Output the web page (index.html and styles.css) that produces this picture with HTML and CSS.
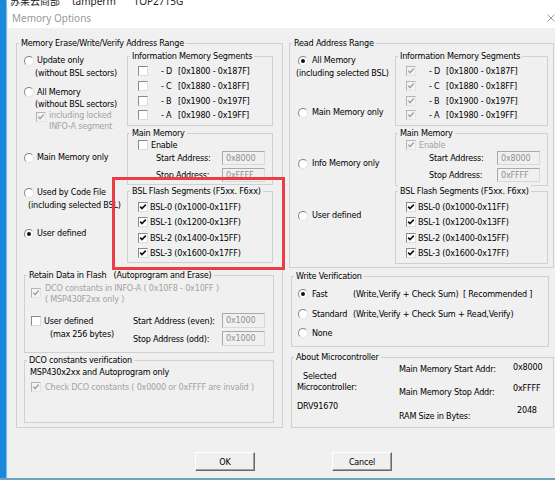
FILE: index.html
```html
<!DOCTYPE html>
<html lang="en">

<head>
    <meta charset="UTF-8">
    <meta name="viewport" content="width=device-width, initial-scale=1.0">
    <title>Memory Options</title>
    <link rel="stylesheet" href="styles.css">
</head>

<body>
    <!-- window behind the dialog -->
    <div class="edge"></div>

    <div class="screen">
        <div class="behind">
            <span class="behind-cjk">苏果云商部</span>
            <span class="behind-a">tamperm</span>
            <span class="behind-b">TOP2715G</span>
        </div>

        <div class="dialog">
            <div class="titlebar">
                <span class="title">Memory Options</span>
                <svg class="close" viewBox="0 0 8 8" width="8" height="8">
                    <path d="M0.5 0.5 L7.5 7.5 M7.5 0.5 L0.5 7.5" stroke="#9a9a9a" stroke-width="1" fill="none" />
                </svg>
            </div>

            <div class="dialog-body">
                <div class="columns">

                    <!-- Erase / write / verify -->
                    <div class="group erase">
                        <span class="group-title">Memory Erase/Write/Verify Address Range</span>

                        <div class="group-top">
                            <div class="radio-col radio-col-l">
                                <div class="opt opt-update">
                                    <span class="radio"></span>
                                    <div class="opt-text">
                                        <div>Update only</div>
                                        <div class="sub">(without BSL sectors)</div>
                                    </div>
                                </div>
                                <div class="opt opt-all">
                                    <span class="radio"></span>
                                    <div class="opt-text">
                                        <div>All Memory</div>
                                        <div class="sub">(without BSL sectors)</div>
                                        <div class="check-item locked">
                                            <span class="check on off"></span>
                                            <div class="dim">including locked<br>INFO-A segment</div>
                                        </div>
                                    </div>
                                </div>
                                <div class="opt opt-main">
                                    <span class="radio"></span>
                                    <div class="opt-text">Main Memory only</div>
                                </div>
                                <div class="opt opt-code">
                                    <span class="radio"></span>
                                    <div class="opt-text">
                                        <div>Used by Code File</div>
                                        <div class="sub sub-far">(including selected BSL)</div>
                                    </div>
                                </div>
                                <div class="opt opt-user">
                                    <span class="radio on"></span>
                                    <div class="opt-text">User defined</div>
                                </div>
                            </div>

                            <div class="subframes subframes-l">
                                <div class="group info">
                                    <span class="group-title">Information Memory Segments</span>
                                    <div class="seg-row"><span class="check"></span><span class="seg-letter">- D</span><span>[0x1800 - 0x187F]</span></div>
                                    <div class="seg-row"><span class="check"></span><span class="seg-letter">- C</span><span>[0x1880 - 0x18FF]</span></div>
                                    <div class="seg-row"><span class="check"></span><span class="seg-letter">- B</span><span>[0x1900 - 0x197F]</span></div>
                                    <div class="seg-row"><span class="check"></span><span class="seg-letter">- A</span><span>[0x1980 - 0x19FF]</span></div>
                                </div>

                                <div class="group main side-l">
                                    <span class="group-title">Main Memory</span>
                                    <div class="enable-row"><span class="check"></span><span>Enable</span></div>
                                    <div class="addr-row"><span class="addr-label">Start Address:</span><span class="field">0x8000</span></div>
                                    <div class="addr-row"><span class="addr-label">Stop Address:</span><span class="field">0xFFFF</span></div>
                                </div>

                                <div class="group bsl">
                                    <span class="group-title">BSL Flash Segments (F5xx. F6xx)</span>
                                    <div class="bsl-row"><span class="check on"></span><span>BSL-0 (0x1000-0x11FF)</span></div>
                                    <div class="bsl-row"><span class="check on"></span><span>BSL-1 (0x1200-0x13FF)</span></div>
                                    <div class="bsl-row"><span class="check on"></span><span>BSL-2 (0x1400-0x15FF)</span></div>
                                    <div class="bsl-row"><span class="check on"></span><span>BSL-3 (0x1600-0x17FF)</span></div>
                                </div>
                            </div>
                        </div>

                        <div class="group retain">
                            <span class="group-title">Retain Data in Flash&nbsp;&nbsp;&nbsp;(Autoprogram and Erase)</span>
                            <div class="check-item dco-info">
                                <span class="check on off"></span>
                                <div class="dim">DCO constants in INFO-A ( 0x10F8 - 0x10FF )<br>( MSP430F2xx only )</div>
                            </div>
                            <div class="retain-user">
                                <div class="check-item user-def">
                                    <span class="check"></span>
                                    <div>User defined<div class="max">(max 256 bytes)</div></div>
                                </div>
                                <div class="retain-addr">
                                    <div class="addr-row"><span class="addr-label">Start Address (even):</span><span class="field">0x1000</span></div>
                                    <div class="addr-row"><span class="addr-label">Stop Address (odd):</span><span class="field">0x1000</span></div>
                                </div>
                            </div>
                        </div>

                        <div class="group dco">
                            <span class="group-title">DCO constants verification</span>
                            <div>MSP430x2xx and Autoprogram only</div>
                            <div class="check-item dco-check">
                                <span class="check on off"></span>
                                <span class="dim">Check DCO constants ( 0x0000 or 0xFFFF are invalid )</span>
                            </div>
                        </div>
                    </div>

                    <div class="right-col">
                        <!-- Read range -->
                        <div class="group read">
                            <span class="group-title">Read Address Range</span>
                            <div class="group-top">
                                <div class="radio-col radio-col-r">
                                    <div class="opt opt-r1">
                                        <span class="radio on"></span>
                                        <div class="opt-text">
                                            <div>All Memory</div>
                                            <div class="sub sub-wide">(including selected BSL)</div>
                                        </div>
                                    </div>
                                    <div class="opt opt-r2">
                                        <span class="radio"></span>
                                        <div class="opt-text">Main Memory only</div>
                                    </div>
                                    <div class="opt opt-r3">
                                        <span class="radio"></span>
                                        <div class="opt-text">Info Memory only</div>
                                    </div>
                                    <div class="opt opt-r4">
                                        <span class="radio"></span>
                                        <div class="opt-text">User defined</div>
                                    </div>
                                </div>

                                <div class="subframes subframes-r">
                                    <div class="group info">
                                        <span class="group-title">Information Memory Segments</span>
                                        <div class="seg-row"><span class="check on off"></span><span class="seg-letter">- D</span><span>[0x1800 - 0x187F]</span></div>
                                        <div class="seg-row"><span class="check on off"></span><span class="seg-letter">- C</span><span>[0x1880 - 0x18FF]</span></div>
                                        <div class="seg-row"><span class="check on off"></span><span class="seg-letter">- B</span><span>[0x1900 - 0x197F]</span></div>
                                        <div class="seg-row"><span class="check on off"></span><span class="seg-letter">- A</span><span>[0x1980 - 0x19FF]</span></div>
                                    </div>

                                    <div class="group main side-r">
                                        <span class="group-title">Main Memory</span>
                                        <div class="enable-row"><span class="check on off"></span><span class="dim">Enable</span></div>
                                        <div class="addr-row"><span class="addr-label">Start Address:</span><span class="field">0x8000</span></div>
                                        <div class="addr-row"><span class="addr-label">Stop Address:</span><span class="field">0xFFFF</span></div>
                                    </div>

                                    <div class="group bsl">
                                        <span class="group-title">BSL Flash Segments (F5xx. F6xx)</span>
                                        <div class="bsl-row"><span class="check on"></span><span>BSL-0 (0x1000-0x11FF)</span></div>
                                        <div class="bsl-row"><span class="check on"></span><span>BSL-1 (0x1200-0x13FF)</span></div>
                                        <div class="bsl-row"><span class="check on"></span><span>BSL-2 (0x1400-0x15FF)</span></div>
                                        <div class="bsl-row"><span class="check on"></span><span>BSL-3 (0x1600-0x17FF)</span></div>
                                    </div>
                                </div>
                            </div>
                        </div>

                        <!-- Write verification -->
                        <div class="group write">
                            <span class="group-title">Write Verification</span>
                            <div class="wv-row">
                                <span class="radio on"></span>
                                <span class="wv-name">Fast</span>
                                <span class="wv-desc">(Write,Verify + Check Sum)</span>
                                <span>[ Recommended ]</span>
                            </div>
                            <div class="wv-row">
                                <span class="radio"></span>
                                <span class="wv-name">Standard</span>
                                <span>(Write,Verify + Check Sum + Read,Verify)</span>
                            </div>
                            <div class="wv-row">
                                <span class="radio"></span>
                                <span class="wv-name">None</span>
                            </div>
                        </div>

                        <!-- Device info -->
                        <div class="group about">
                            <span class="group-title">About Microcontroller</span>
                            <div class="about-left">
                                <div class="selected">Selected</div>
                                <div>Microcontroller:</div>
                                <div class="device">DRV91670</div>
                            </div>
                            <div class="about-right">
                                <div class="ab-row ab-1"><span class="ab-label">Main Memory Start Addr:</span><span>0x8000</span></div>
                                <div class="ab-row ab-2"><span class="ab-label">Main Memory Stop Addr:</span><span>0xFFFF</span></div>
                                <div class="ab-row ab-3"><span class="ab-label">RAM Size in Bytes:</span><span class="ab-ram">2048</span></div>
                            </div>
                        </div>
                    </div>
                </div>

                <div class="buttons">
                    <button class="btn">OK</button>
                    <button class="btn">Cancel</button>
                </div>

                <!-- red marker drawn over the BSL segments -->
                <div class="highlight"></div>
            </div>
        </div>
    </div>
</body>

</html>
```

FILE: styles.css
```css
* {
    margin: 0;
    padding: 0;
    box-sizing: border-box;
}

body {
    width: 555px;
    height: 480px;
    overflow: hidden;
    display: flex;
    background: #fff;
    border-bottom: 2px solid #6fa3ba;
    font-family: "DejaVu Sans Condensed", "DejaVu Sans", sans-serif;
    font-stretch: condensed;
    font-size: 9px;
    letter-spacing: -0.2px;
    line-height: 12px;
    color: #000;
    white-space: nowrap;
}

.edge {
    width: 7px;
    flex: none;
    background: #1b89d9;
    border-right: 1px solid #79bdee;
}

.screen {
    flex: 1;
    display: flex;
    flex-direction: column;
    min-width: 0;
}

/* strip of the window behind */
.behind {
    height: 7px;
    overflow: hidden;
    display: flex;
    align-items: flex-start;
    padding-left: 3px;
    font-family: "Noto Sans", "Noto Sans CJK SC", sans-serif;
    font-size: 10px;
    line-height: 12px;
    letter-spacing: 0;
    color: #222;
}

.behind span {
    margin-top: -5px;
}

.behind-a {
    margin-left: 12px;
}

.behind-b {
    margin-left: 18px;
}

.dialog {
    flex: 1;
    display: flex;
    flex-direction: column;
    background: #f0f0f0;
    border-left: 1px solid #e4ecf3;
}

.titlebar {
    height: 21px;
    flex: none;
    display: flex;
    align-items: center;
    padding-left: 4px;
    background: #fff;
}

.title {
    font-family: "Noto Sans", sans-serif;
    font-size: 10px;
    letter-spacing: 0;
    color: #999;
}

.close {
    margin-left: auto;
}

.dialog-body {
    flex: 1;
    position: relative;
    padding: 15px 0 0 8px;
}

.columns {
    display: flex;
    align-items: flex-start;
}

/* group boxes */
.group {
    position: relative;
    border: 1px solid #d0d0d0;
}

.group-title {
    position: absolute;
    top: -7px;
    left: 2px;
    padding: 0 2px;
    background: #f0f0f0;
    line-height: 12px;
}

.group-top {
    display: flex;
}

.erase {
    width: 267px;
    height: 385px;
    padding: 0 8px 0 7px;
}

.radio-col-l {
    width: 103px;
}

.subframes-l {
    width: 146px;
}

.right-col {
    width: 265px;
    margin-left: 6px;
}

.read {
    height: 225px;
    padding-right: 5px;
}

.radio-col-r {
    width: 105px;
    padding-left: 8px;
}

.subframes-r {
    width: 153px;
}

/* radio buttons and check boxes */
.radio {
    position: relative;
    flex: none;
    width: 10px;
    height: 10px;
    margin-top: 1px;
    border-radius: 50%;
    background: #fff;
    border: 1px solid;
    border-color: #858585 #e2e2e2 #e2e2e2 #858585;
}

.radio.on::after {
    content: "";
    position: absolute;
    left: 2px;
    top: 2px;
    width: 4px;
    height: 4px;
    border-radius: 50%;
    background: #111;
}

.check {
    flex: none;
    width: 10px;
    height: 10px;
    background: #fff;
    border: 1px solid;
    border-color: #8a8a8a #dcdcdc #dcdcdc #8a8a8a;
}

.check.on {
    background: #fff url("data:image/svg+xml,%3Csvg xmlns='http://www.w3.org/2000/svg' viewBox='0 0 8 8'%3E%3Cpath d='M1.2 3.6 L3 5.6 L6.8 1.6' stroke='%23111' stroke-width='1.6' fill='none'/%3E%3C/svg%3E") center / 8px 8px no-repeat;
}

.check.on.off {
    background-color: #f3f3f3;
    background-image: url("data:image/svg+xml,%3Csvg xmlns='http://www.w3.org/2000/svg' viewBox='0 0 8 8'%3E%3Cpath d='M1.2 3.6 L3 5.6 L6.8 1.6' stroke='%23a4a4a4' stroke-width='1.4' fill='none'/%3E%3C/svg%3E");
    border-color: #b4b4b4 #e4e4e4 #e4e4e4 #b4b4b4;
}

.dim {
    color: #a3a3a3;
}

/* options in the radio columns */
.opt {
    display: flex;
    align-items: flex-start;
    gap: 3px;
    line-height: 13px;
}

.opt .radio {
    margin-top: 1.5px;
}

.sub {
    margin-left: -2px;
}

.sub-far {
    margin-left: -9px;
}

.sub-wide {
    margin-left: -16px;
}

.opt-update {
    margin-top: 10px;
}

.opt-all {
    margin-top: 6px;
    line-height: 12px;
}

.opt-all .radio {
    margin-top: 1px;
}

.opt-main {
    margin-top: 19px;
    line-height: 12px;
}

.opt-code {
    margin-top: 23px;
}

.opt-user {
    margin-top: 15px;
    line-height: 12px;
}

.radio-col-r .opt {
    gap: 4px;
}

.opt-r1 {
    margin-top: 10px;
}

.opt-r2 {
    margin-top: 26px;
}

.opt-r3 {
    margin-top: 38px;
}

.opt-r4 {
    margin-top: 39px;
}

.check-item {
    display: flex;
    align-items: flex-start;
}

.locked {
    margin-left: -1px;
    gap: 3px;
    line-height: 11px;
}

.locked .check {
    margin-top: 2px;
}

/* information segments */
.info {
    margin-top: 12px;
    height: 70px;
    padding-top: 7px;
}

.seg-row {
    display: flex;
    align-items: center;
    height: 14.7px;
    padding-left: 10px;
}

.seg-letter {
    width: 17px;
    margin-left: 13px;
}

/* main memory */
.main {
    margin-top: 7px;
    height: 52px;
    padding-top: 5px;
}

.subframes-r .main {
    height: 53px;
}

.enable-row {
    display: flex;
    align-items: center;
    gap: 3px;
    height: 12px;
    padding-left: 10px;
}

.addr-row {
    display: flex;
    align-items: center;
    height: 14px;
}

.addr-row + .addr-row {
    margin-top: 3px;
}

.side-l .addr-row {
    padding-left: 28px;
}

.side-l .addr-label {
    width: 66px;
}

.side-r .addr-row {
    padding-left: 33px;
}

.side-r .addr-label {
    width: 68px;
}

.field {
    width: 43px;
    height: 14px;
    padding-left: 3px;
    line-height: 12px;
    background: #f0f0f0;
    border: 1px solid;
    border-color: #a9a9a9 #d9d9d9 #d9d9d9 #a9a9a9;
    color: #909090;
}

/* BSL segments */
.bsl {
    margin-top: 6px;
    height: 72px;
    padding-top: 7.5px;
}

.subframes-r .bsl {
    margin-top: 5px;
    height: 73px;
}

.bsl-row {
    display: flex;
    align-items: center;
    gap: 2px;
    height: 15.33px;
    padding-left: 10px;
}

/* retain data */
.retain {
    margin-top: 12px;
    height: 78px;
    padding: 7px 0 0 6px;
}

.dco-info {
    gap: 4px;
    line-height: 11px;
}

.dco-info .check {
    margin-top: 5px;
}

.retain-user {
    display: flex;
    margin-top: 8px;
}

.user-def {
    width: 102px;
    margin-top: 2px;
    gap: 3px;
    line-height: 13px;
}

.user-def .check {
    margin-top: 1px;
}

.max {
    margin-left: 6px;
}

.retain-addr .addr-row {
    height: 15px;
}

.retain-addr .addr-label {
    width: 89px;
}

.retain-addr .field {
    height: 15px;
}

/* DCO verification */
.dco {
    margin-top: 7px;
    height: 63px;
    padding: 5px 0 0 5px;
}

.dco-check {
    margin-top: 3px;
    padding-left: 1px;
    gap: 4px;
}

.dco-check .check {
    margin-top: 1px;
}

/* write verification */
.write {
    width: 258px;
    height: 71px;
    margin: 8px 0 0 2px;
    padding: 11px 0 0 6px;
}

.wv-row {
    display: flex;
    align-items: center;
    height: 12px;
}

.wv-row .radio {
    margin-top: 0;
}

.wv-row + .wv-row {
    margin-top: 8px;
}

.wv-row:last-child {
    margin-top: 7px;
}

.wv-name {
    width: 41px;
    margin-left: 4px;
}

.wv-desc {
    width: 110px;
}

/* microcontroller info */
.about {
    display: flex;
    width: 263px;
    height: 71px;
    margin: 10px 0 0 2px;
}

.about-left {
    width: 107px;
    padding: 13px 0 0 5px;
    line-height: 11px;
}

.selected {
    margin-left: 6px;
}

.device {
    margin-top: 7px;
    line-height: 12px;
}

.about-right {
    padding-top: 3px;
}

.ab-row {
    display: flex;
    align-items: flex-start;
}

.ab-label {
    width: 114px;
}

.ab-1 .ab-label {
    margin-top: 2px;
}

.ab-2 {
    margin-top: 7px;
}

.ab-2 .ab-label {
    margin-top: 4px;
}

.ab-3 {
    margin-top: 6px;
}

.ab-3 .ab-label {
    margin-top: 6px;
}

.ab-ram {
    margin-left: 4px;
}

/* buttons */
.buttons {
    display: flex;
    margin-top: 24px;
    padding-left: 179px;
}

.btn {
    width: 60px;
    height: 19px;
    font: inherit;
    letter-spacing: inherit;
    color: #000;
    background: #f0f0f0;
    border: 1px solid;
    border-color: #fff #6a6a6a #6a6a6a #fff;
    box-shadow: inset -1px -1px 0 #a0a0a0;
}

.btn + .btn {
    margin-left: 77px;
}

.highlight {
    position: absolute;
    left: 104px;
    top: 149px;
    width: 173px;
    height: 93px;
    border: 3px solid #ec3d46;
}
```
